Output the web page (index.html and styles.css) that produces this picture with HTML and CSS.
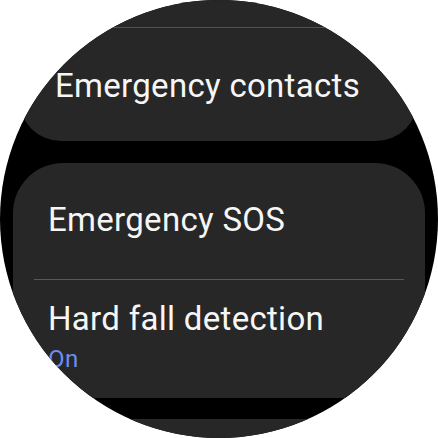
FILE: index.html
```html
<!DOCTYPE html>
<html lang="en">
<head>
<meta charset="utf-8">
<title>Safety</title>
<link rel="stylesheet" href="styles.css">
</head>
<body>
<div class="screen">
  <div class="card card-top">
    <div class="row-clipped"></div>
    <div class="divider divider-top"></div>
    <div class="row row-contacts">
      <div class="title">Emergency contacts</div>
    </div>
  </div>
  <div class="card card-mid">
    <div class="row row-sos">
      <div class="title">Emergency SOS</div>
    </div>
    <div class="divider"></div>
    <div class="row row-fall">
      <div class="title">Hard fall detection</div>
      <div class="status">On</div>
    </div>
  </div>
  <div class="card card-bottom"></div>
</div>
</body>
</html>
```
FILE: styles.css
```css
html, body {
  margin: 0;
  padding: 0;
  background: #ffffff;
}

.screen {
  width: 438px;
  height: 438px;
  border-radius: 50%;
  overflow: hidden;
  background: #000000;
  display: flex;
  flex-direction: column;
  gap: 22px;
  font-family: Roboto, "Noto Sans", sans-serif;
  color: #f6f6f6;
}

.card {
  flex-shrink: 0;
  background: #272727;
}

.card-top {
  margin: 0 20px 0 19px;
  border-radius: 0 0 42px 42px;
}

.card-mid {
  margin: 0 13px;
  border-radius: 50px;
}

.card-bottom {
  margin: -1px 13px 0;
  height: 60px;
  border-radius: 50px 50px 0 0;
}

.row-clipped {
  height: 27px;
}

.divider {
  height: 1px;
  background: #58585a;
  margin: 0 21px;
}

.divider-top {
  margin: 0;
  background: #525254;
}

.title {
  font-size: 33px;
  line-height: 40px;
  letter-spacing: 0.3px;
  white-space: nowrap;
}

.row-contacts {
  padding: 38px 0 35px 36px;
}

.row-sos {
  padding: 37px 0 39px 35px;
}

.row-fall {
  padding: 19px 0 25px 35px;
}

.status {
  margin-top: 6px;
  font-size: 24px;
  line-height: 28px;
  letter-spacing: 0.4px;
  color: #6d8ef0;
}
```
